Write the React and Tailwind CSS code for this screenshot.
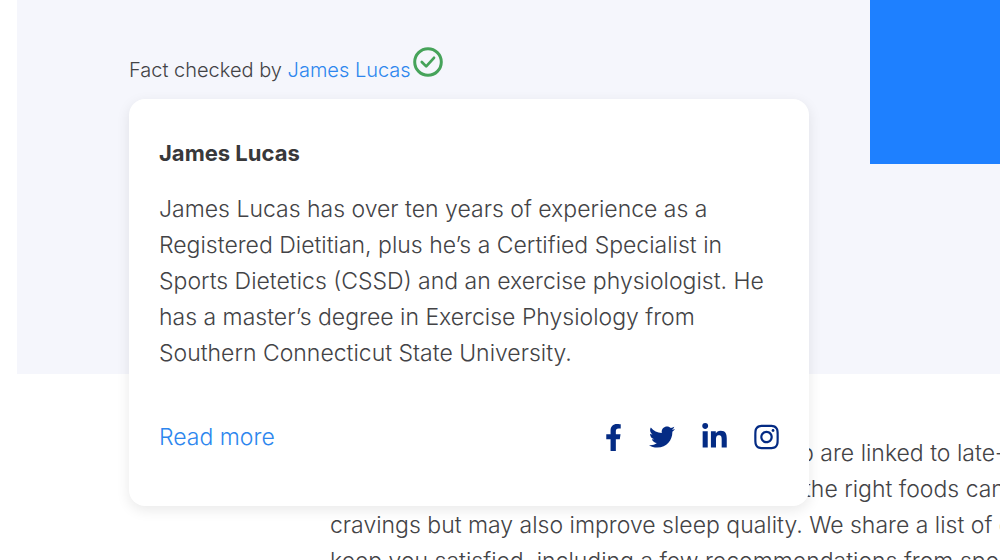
import { FaFacebookF, FaInstagram, FaLinkedinIn, FaTwitter } from "react-icons/fa";

const SOCIAL_LINKS = [
  { label: "Facebook", href: "#facebook", icon: <FaFacebookF className="h-[27px] w-[17px]" /> },
  { label: "Twitter", href: "#twitter", icon: <FaTwitter className="size-[26px]" /> },
  { label: "LinkedIn", href: "#linkedin", icon: <FaLinkedinIn className="h-7 w-[25px]" /> },
  { label: "Instagram", href: "#instagram", icon: <FaInstagram className="h-7 w-[25px]" /> },
];

function CheckBadge() {
  return (
    <svg viewBox="0 0 30 30" className="size-[30px]" fill="none" stroke="#46a35a" strokeLinecap="round" strokeLinejoin="round" aria-hidden="true">
      <circle cx="15" cy="15" r="13.3" strokeWidth="3" />
      <path d="M8.8 15l4.4 4.4 7.8-8.6" strokeWidth="2.7" />
    </svg>
  );
}

function ReviewerCard() {
  return (
    <article className="absolute top-full left-0 z-10 mt-3 w-[680px] rounded-2xl bg-white px-[30px] pt-9 pb-[51px] shadow-[0_4px_14px_rgba(0,0,0,0.09)]">
      <h2 className="text-[22px] leading-9 font-bold text-[#38383a]">James Lucas</h2>
      <p className="mt-5 text-[23px] leading-9">
        James Lucas has over ten years of experience as a<br />
        Registered Dietitian, plus he’s a Certified Specialist in<br />
        Sports Dietetics (CSSD) and an exercise physiologist. He<br />
        has a master’s degree in Exercise Physiology from<br />
        Southern Connecticut State University.
      </p>
      <div className="mt-12 flex items-center justify-between">
        <a href="#reviewer" className="text-[23px] leading-9 text-[#2d86ee]">
          Read more
        </a>
        <nav className="flex items-center gap-[27px] text-[#042b84]">
          {SOCIAL_LINKS.map((link) => (
            <a key={link.label} href={link.href} aria-label={link.label}>
              {link.icon}
            </a>
          ))}
        </nav>
      </div>
    </article>
  );
}

function App() {
  return (
    <main className="h-screen overflow-hidden bg-white font-['Inter','Liberation_Sans',sans-serif] font-light text-[#434346]">
      <header className="ml-[17px] flex h-[374px] items-start justify-between bg-[#f5f6fc]">
        <div className="relative ml-28 pt-[47px]">
          <div className="flex h-10 items-start gap-0.5 text-xl whitespace-nowrap">
            <p className="pt-2 leading-[30px]">
              Fact checked by{" "}
              <a href="#reviewer" className="text-[#2d86ee]">
                James Lucas
              </a>
            </p>
            <CheckBadge />
          </div>
          <ReviewerCard />
        </div>
        <aside className="h-[164px] w-[130px] bg-[#1e80ff]" />
      </header>
      <div className="ml-[330px] pt-[61px] text-[23px] leading-9 whitespace-nowrap">
        <p className="pl-[470px]">p are linked to late-n</p>
        <p className="pl-[474px]">the right foods can</p>
        <p>cravings but may also improve sleep quality. We share a list of o</p>
        <p>keep you satisfied, including a few recommendations from spor</p>
      </div>
    </main>
  );
}

export default App;
